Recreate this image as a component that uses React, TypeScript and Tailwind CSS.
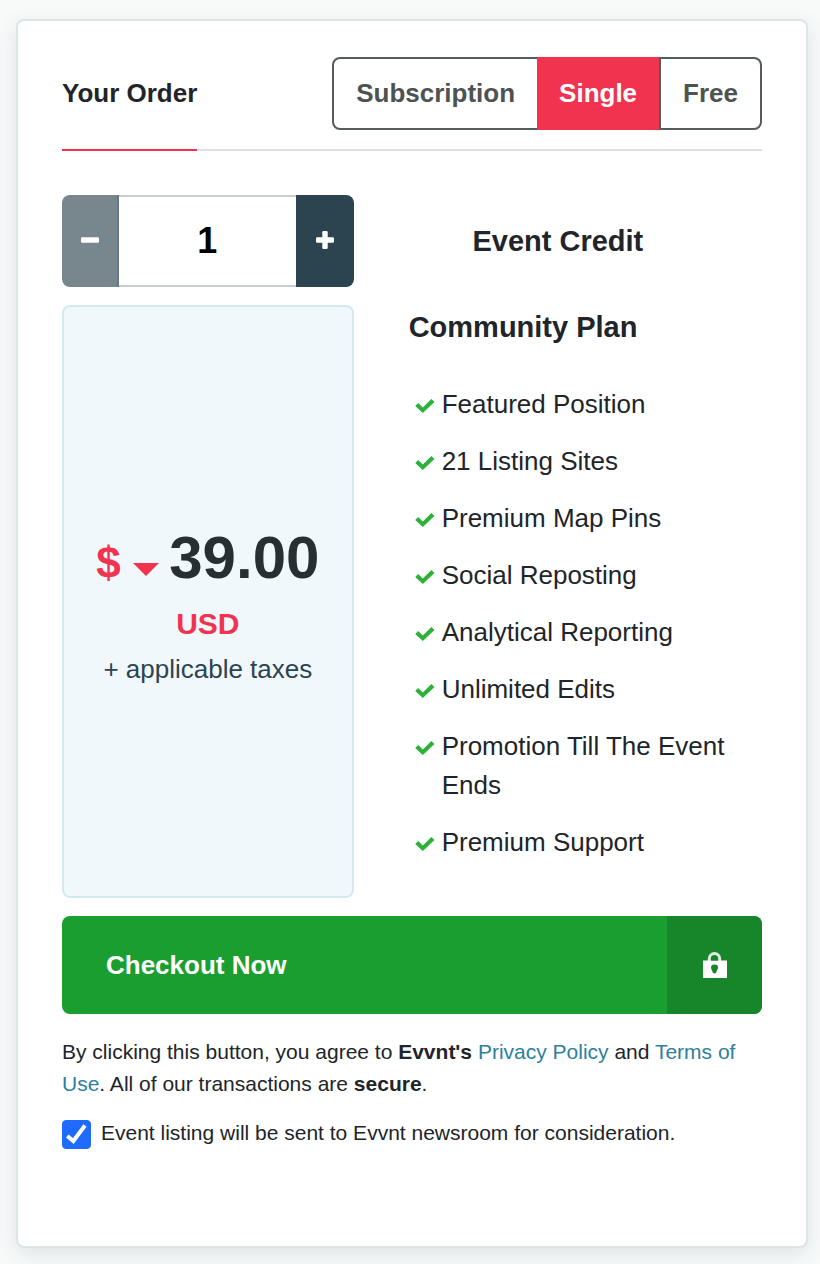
import { useState } from "react";

const PLANS = ["Subscription", "Single", "Free"];

const UNIT_PRICE = 39;

const FEATURES = [
  "Featured Position",
  "21 Listing Sites",
  "Premium Map Pins",
  "Social Reposting",
  "Analytical Reporting",
  "Unlimited Edits",
  "Promotion Till The Event Ends",
  "Premium Support",
];

const CURRENCIES: Record<string, string> = {
  USD: "$",
  GBP: "£",
  EUR: "€",
};

const MinusIcon = () => (
  <svg viewBox="0 0 18 18" fill="currentColor" className="size-[18px] -mt-0.5" aria-hidden="true">
    <rect y="6.300" width="18" height="5.400" rx="1.300" />
  </svg>
);

const PlusIcon = () => (
  <svg viewBox="0 0 18 18" fill="currentColor" className="size-[18px] -mt-0.5" aria-hidden="true">
    <rect y="6.300" width="18" height="5.400" rx="1.300" />
    <rect x="6.300" width="5.400" height="18" rx="1.300" />
  </svg>
);

const CheckIcon = ({ className }: { className?: string }) => (
  <svg viewBox="0 0 20 14" fill="currentColor" className={className} aria-hidden="true">
    <path d="M0.200 7.100 3.200 4.100 7.800 8.500 16.400 0.100 19.500 3.100 7.800 14Z" />
  </svg>
);

const LockIcon = () => (
  <svg viewBox="0 0 24 26" className="w-6 h-[26px]" aria-hidden="true">
    <path d="M6.300 11V6.800a5.200 5.300 0 0 1 10.400 0V11" fill="none" stroke="white" strokeOpacity="0.850" strokeWidth="3" />
    <path d="M0 8.500h24V26H0Z" fill="white" />
    <path d="M8.300 8.500V7a3.200 2.500 0 0 1 6.400 0V8.500Z" fill="#178529" />
    <path d="M8 15.800a3.500 3.200 0 0 1 7 0c0 1.800-1.500 2.700-2 5.400h-3c-.5-2.700-2-3.600-2-5.400Z" fill="#178529" />
  </svg>
);

interface IPlanTabsProps {
  active: string;
  onChange: (plan: string) => void;
}

const PlanTabs = ({ active, onChange }: IPlanTabsProps) => (
  <div className="flex rounded-lg border-2 border-[#565c5b] text-[26px] leading-[39px] font-bold">
    {PLANS.map((plan) => (
      <button
        key={plan}
        type="button"
        aria-pressed={plan === active}
        onClick={() => onChange(plan)}
        className={
          plan === active
            ? "-my-0.5 py-[17px] px-[22px] bg-[#f1334f] text-white cursor-pointer"
            : "py-[15px] px-[22px] text-[#4d5352] last:border-l-2 last:border-[#565c5b] cursor-pointer"
        }
      >
        {plan}
      </button>
    ))}
  </div>
);

interface IQuantityProps {
  value: number;
  onChange: (value: number) => void;
}

const Quantity = ({ value, onChange }: IQuantityProps) => (
  <div className="flex h-[92px] rounded-lg overflow-hidden">
    <button
      type="button"
      aria-label="Remove one credit"
      onClick={() => onChange(Math.max(1, value - 1))}
      className="w-[57px] shrink-0 flex items-center justify-center bg-[#78868e] border-r-2 border-[#66798a] text-white"
    >
      <MinusIcon />
    </button>
    <input
      type="text"
      inputMode="numeric"
      aria-label="Quantity"
      value={value}
      onChange={(e) => onChange(Number(e.target.value) || 1)}
      className="min-w-0 flex-1 border-y-2 border-[#c8cdd1] bg-white text-center text-[36px] font-bold text-black outline-none"
    />
    <button
      type="button"
      aria-label="Add one credit"
      onClick={() => onChange(value + 1)}
      className="w-[58px] shrink-0 flex items-center justify-center bg-[#2c4450] text-white"
    >
      <PlusIcon />
    </button>
  </div>
);

interface IPriceBoxProps {
  amount: number;
  currency: string;
  onCurrencyChange: (currency: string) => void;
}

const PriceBox = ({ amount, currency, onCurrencyChange }: IPriceBoxProps) => (
  <div className="flex flex-col items-center justify-center rounded-lg border-2 border-[#d3eaf0] bg-[#f0f8fb] pt-4">
    <div className="mb-2 flex items-baseline gap-2.5 leading-[60px] font-bold">
      <div className="relative">
        <select
          aria-label="Currency"
          value={currency}
          onChange={(e) => onCurrencyChange(e.target.value)}
          className="block appearance-none pr-[38px] bg-transparent text-[44px] leading-[60px] font-bold text-[#f1334f] outline-none"
        >
          {Object.entries(CURRENCIES).map(([code, sign]) => (
            <option key={code} value={code}>{sign}</option>
          ))}
        </select>
        <svg
          viewBox="0 0 26 13"
          className="absolute right-0 top-1/2 w-[26px] h-[13px] text-[#f1334f] pointer-events-none"
          aria-hidden="true"
        >
          <path d="M0 0H26L13 13Z" fill="currentColor" />
        </svg>
      </div>
      <span className="text-[60px] text-[#272f32]">{amount.toFixed(2)}</span>
    </div>
    <p className="text-[30px] leading-[46px] font-bold text-[#f1334f]">{currency}</p>
    <p className="text-[26px] leading-[44px] text-[#2c4450]">+ applicable taxes</p>
  </div>
);

const App = () => {
  const [plan, setPlan] = useState("Single");
  const [quantity, setQuantity] = useState(1);
  const [currency, setCurrency] = useState("USD");
  const [newsroom, setNewsroom] = useState(true);

  return (
    <div className="min-h-screen bg-[#f8fafa] pl-4 pr-3 pt-[19px] pb-4 font-['Liberation_Sans',Arial,sans-serif] text-[#212529]">
      <main className="rounded-lg border-2 border-[#dce5e6] bg-white px-11 pt-9 pb-[97px] shadow-[0_6px_20px_rgba(44,68,80,0.12)]">
        <header className="flex items-stretch justify-between border-b-2 border-[#dce0e4]">
          <h1 className="-mb-0.5 pt-[17px] border-b-2 border-[#f1334f] text-[26px] leading-[39px] font-bold">
            Your Order
          </h1>
          <div className="pb-[19px]">
            <PlanTabs active={plan} onChange={setPlan} />
          </div>
        </header>

        <div className="mt-11 grid grid-cols-[5fr_7fr] gap-y-[18px]">
          <Quantity value={quantity} onChange={setQuantity} />
          <p className="self-center text-center text-[29px] leading-[44px] font-bold">Event Credit</p>

          <PriceBox amount={UNIT_PRICE * quantity} currency={currency} onCurrencyChange={setCurrency} />
          <section className="pl-[55px] pb-9">
            <h2 className="text-[29px] leading-[44px] font-bold">Community Plan</h2>
            <ul className="mt-9 flex flex-col gap-[18px] text-[26px] leading-[39px]">
              {FEATURES.map((feature) => (
                <li key={feature} className="flex items-start gap-[7px] pl-1.5">
                  <CheckIcon className="mt-3.5 w-5 h-3.5 shrink-0 text-[#2cb13a]" />
                  <span>{feature}</span>
                </li>
              ))}
            </ul>
          </section>
        </div>

        <button
          type="button"
          className="mt-[18px] w-full h-[98px] flex items-stretch rounded-lg overflow-hidden bg-[#1b9e30] text-white text-[26px] font-bold cursor-pointer"
        >
          <span className="flex-1 flex items-center pl-11">Checkout Now</span>
          <span className="w-[95px] flex items-center justify-center bg-[#178529]">
            <LockIcon />
          </span>
        </button>

        <p className="mt-[22px] text-[21px] leading-8">
          By clicking this button, you agree to <strong>Evvnt's</strong>{" "}
          <a href="#privacy" className="text-[#2d809e]">Privacy Policy</a> and{" "}
          <a href="#terms" className="text-[#2d809e]">Terms of Use</a>. All of our transactions are{" "}
          <strong>secure</strong>.
        </p>

        <div className="mt-[17px] flex items-start gap-2.5">
          <span className="relative mt-[3px] shrink-0">
            <input
              id="newsroom"
              type="checkbox"
              checked={newsroom}
              onChange={(e) => setNewsroom(e.target.checked)}
              className="block size-[29px] appearance-none rounded border border-[#1f6bff] bg-white checked:bg-[#1f6bff]"
            />
            {newsroom && (
              <svg viewBox="0 0 29 29" className="absolute inset-0 size-[29px] pointer-events-none" aria-hidden="true">
                <path d="M5.300 16 11.300 21 23 5.500" fill="none" stroke="white" strokeWidth="4" />
              </svg>
            )}
          </span>
          <label htmlFor="newsroom" className="text-[21px] leading-8">
            Event listing will be sent to Evvnt newsroom for consideration.
          </label>
        </div>
      </main>
    </div>
  );
};

export default App;
